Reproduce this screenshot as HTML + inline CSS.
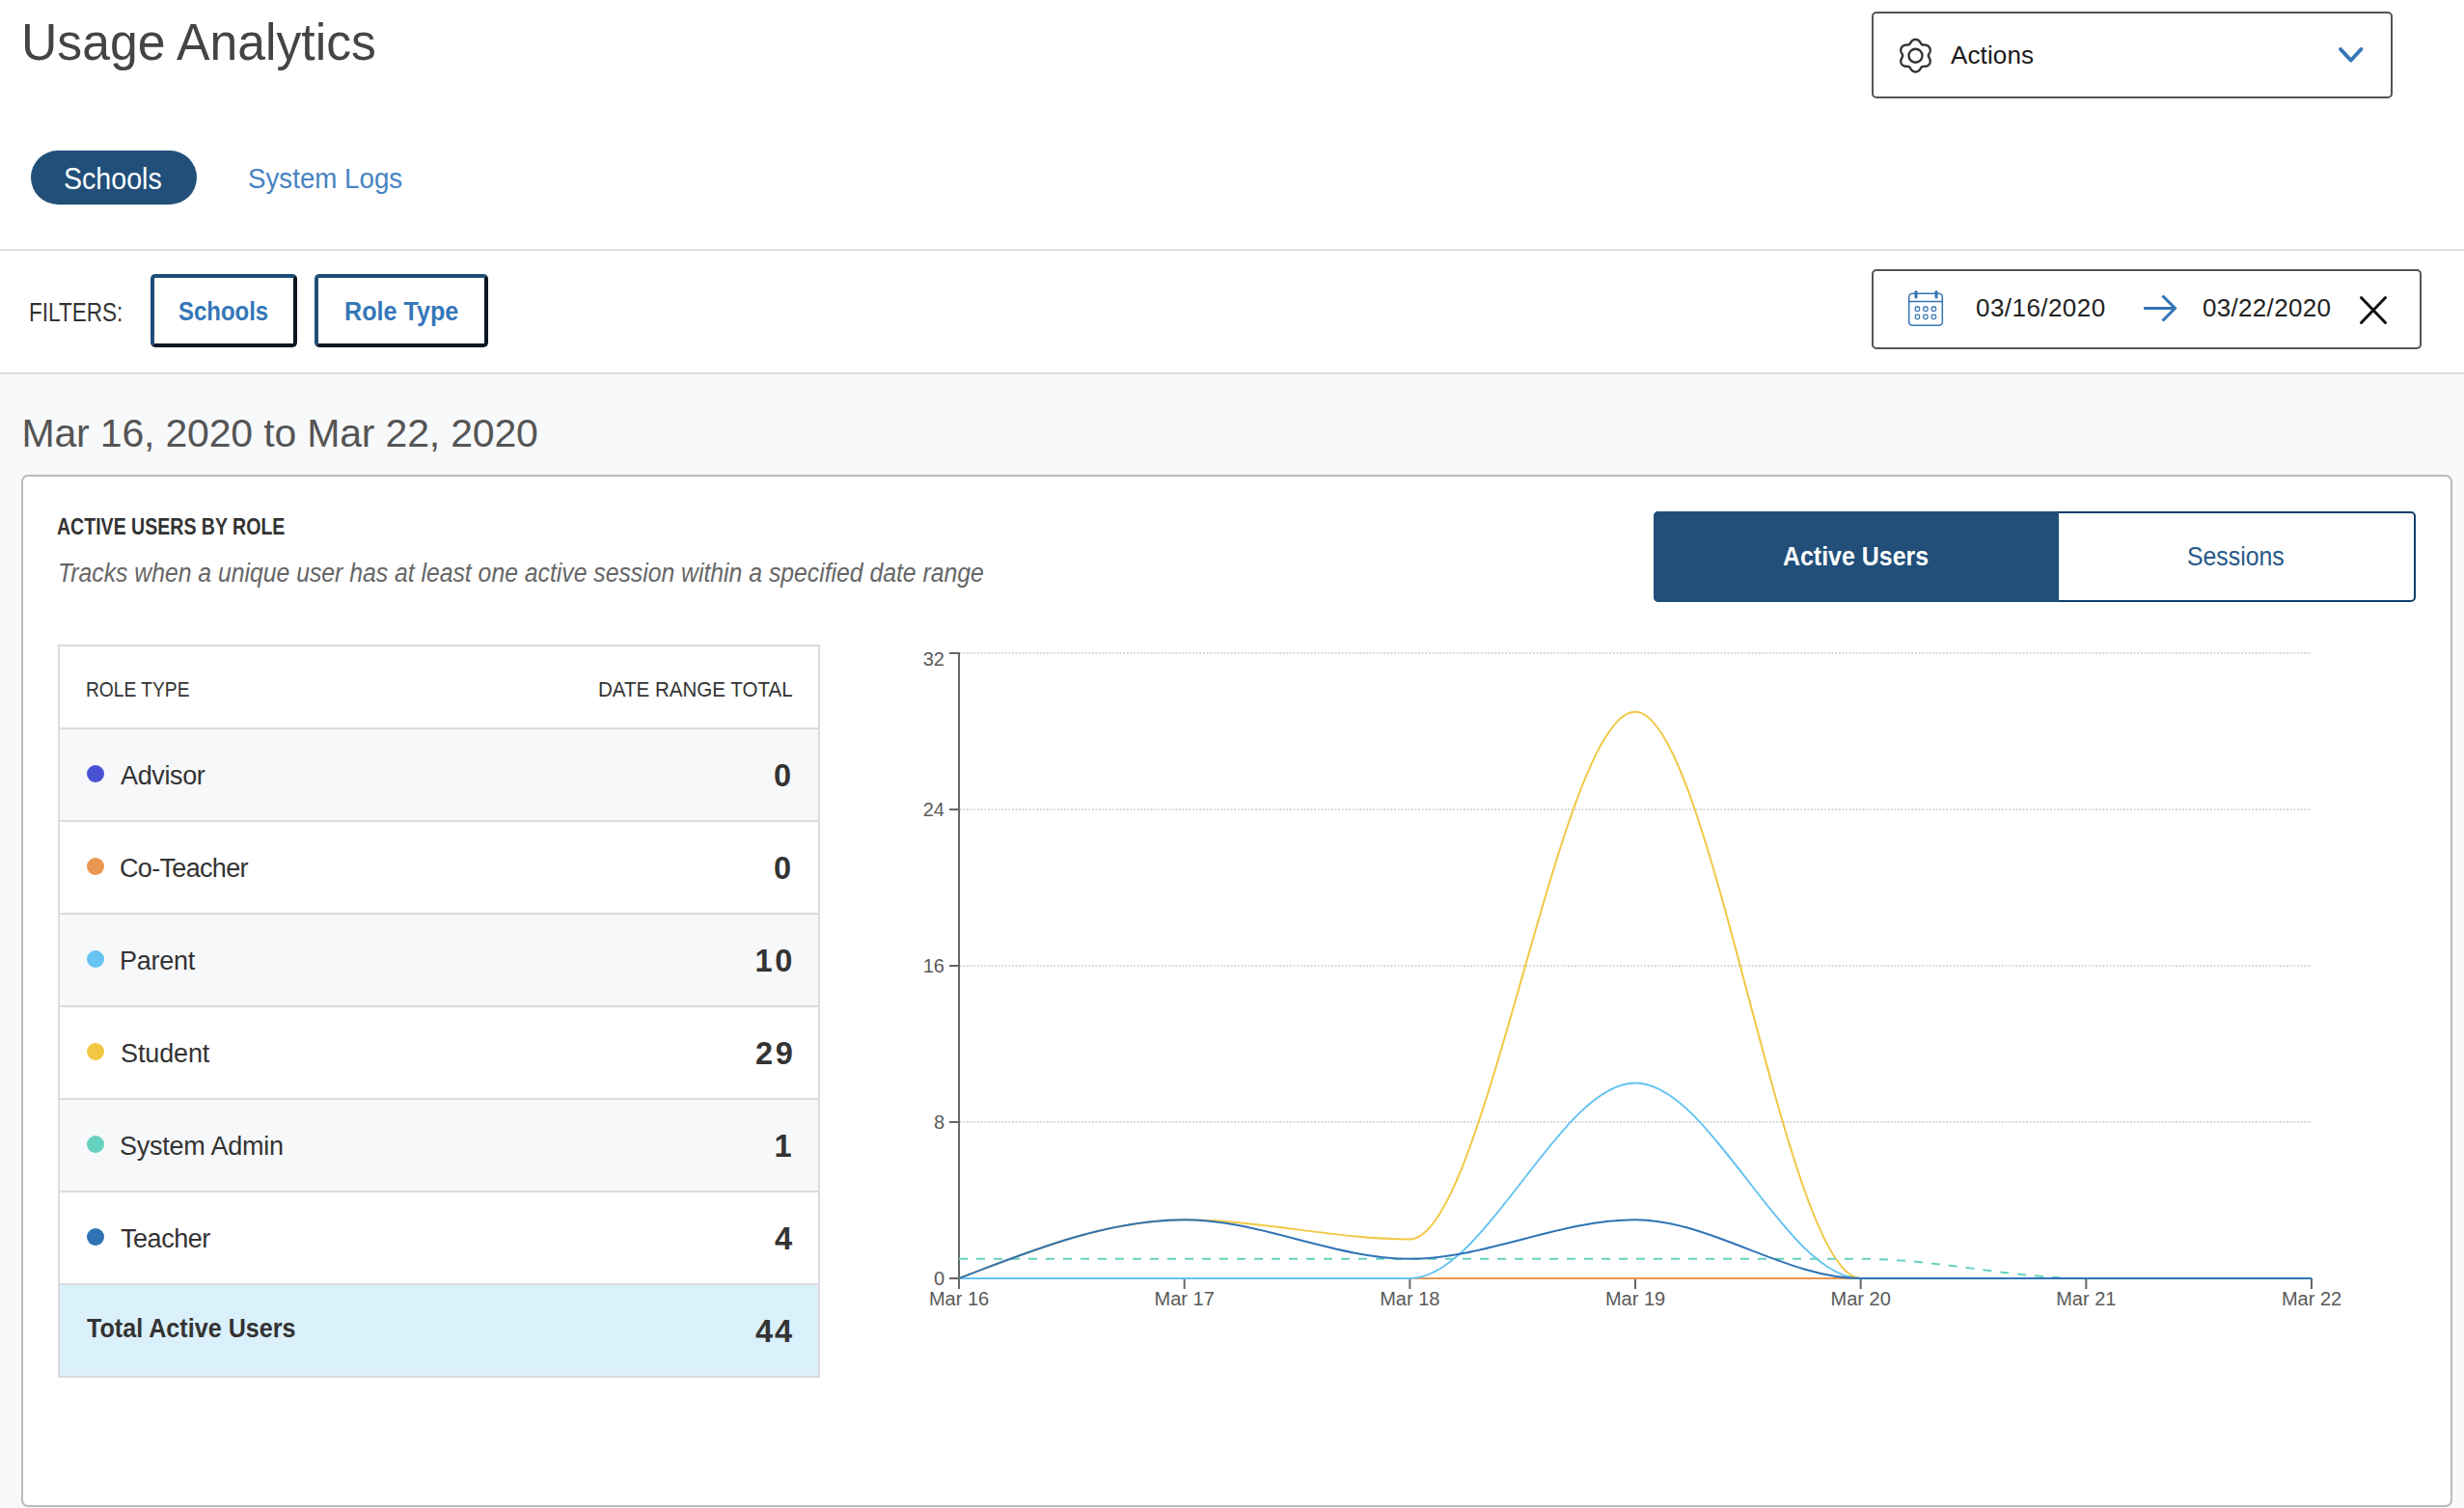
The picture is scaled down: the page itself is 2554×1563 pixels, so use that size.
<!DOCTYPE html>
<html><head><meta charset="utf-8"><style>
html,body{margin:0;padding:0;}
body{width:2554px;height:1563px;overflow:hidden;position:relative;background:#fff;font-family:"Liberation Sans",sans-serif;}
.t{position:absolute;line-height:1;white-space:nowrap;}
.abs{position:absolute;box-sizing:border-box;}
svg{position:absolute;left:0;top:0;}
</style></head><body>
<div class="t" style="left:21.60px;top:17.14px;font-size:53px;color:#444;font-weight:normal;font-style:normal;transform:scaleX(0.9757);transform-origin:0 0">Usage Analytics</div>
<div class="abs" style="left:32px;top:156px;width:172px;height:56px;border-radius:28px;background:#214f7a;"></div>
<div class="t" style="left:66.11px;top:169.96px;font-size:31px;color:#fff;font-weight:normal;font-style:normal;transform:scaleX(0.9224);transform-origin:0 0">Schools</div>
<div class="t" style="left:257.15px;top:170.31px;font-size:30px;color:#4684c2;font-weight:normal;font-style:normal;transform:scaleX(0.9240);transform-origin:0 0">System Logs</div>
<div class="abs" style="left:0;top:258px;width:2554px;height:2px;background:#dedede;"></div>
<div class="t" style="left:30.39px;top:310.85px;font-size:27px;color:#333;font-weight:normal;font-style:normal;transform:scaleX(0.8357);transform-origin:0 0">FILTERS:</div>
<div class="abs" style="left:156px;top:284px;width:152px;height:76px;border:4px outset #1f4e79;border-radius:5px;"></div>
<div class="t" style="left:185.07px;top:310.15px;font-size:27px;color:#3577b8;font-weight:bold;font-style:normal;transform:scaleX(0.8867);transform-origin:0 0">Schools</div>
<div class="abs" style="left:326px;top:284px;width:180px;height:76px;border:4px outset #1f4e79;border-radius:5px;"></div>
<div class="t" style="left:356.64px;top:310.15px;font-size:27px;color:#3577b8;font-weight:bold;font-style:normal;transform:scaleX(0.9307);transform-origin:0 0">Role Type</div>
<div class="abs" style="left:1940px;top:12px;width:540px;height:90px;border:2px solid #555;border-radius:5px;"></div>
<svg width="2554" height="120"><g transform="translate(1985.5,57.7)"><path d="M0.00,-16.75 L0.44,-16.73 L0.87,-16.68 L1.31,-16.60 L1.73,-16.48 L2.15,-16.32 L2.55,-16.12 L2.94,-15.88 L3.32,-15.60 L3.67,-15.28 L4.00,-14.93 L4.31,-14.56 L4.60,-14.16 L4.87,-13.76 L5.13,-13.37 L5.38,-12.98 L5.62,-12.62 L5.86,-12.29 L6.12,-12.00 L6.38,-11.76 L6.67,-11.56 L6.99,-11.41 L7.34,-11.30 L7.71,-11.22 L8.12,-11.18 L8.55,-11.15 L9.01,-11.13 L9.48,-11.10 L9.97,-11.07 L10.45,-11.01 L10.93,-10.93 L11.40,-10.82 L11.85,-10.67 L12.28,-10.49 L12.68,-10.27 L13.06,-10.02 L13.40,-9.74 L13.72,-9.43 L14.01,-9.10 L14.27,-8.75 L14.51,-8.38 L14.71,-7.99 L14.88,-7.58 L15.03,-7.17 L15.13,-6.74 L15.20,-6.30 L15.23,-5.85 L15.22,-5.39 L15.16,-4.93 L15.07,-4.46 L14.93,-4.00 L14.76,-3.54 L14.57,-3.10 L14.36,-2.66 L14.14,-2.24 L13.93,-1.83 L13.74,-1.44 L13.58,-1.07 L13.45,-0.71 L13.38,-0.35 L13.35,-0.00 L13.38,0.35 L13.45,0.71 L13.58,1.07 L13.74,1.44 L13.93,1.83 L14.14,2.24 L14.36,2.66 L14.57,3.10 L14.76,3.54 L14.93,4.00 L15.07,4.46 L15.16,4.93 L15.22,5.39 L15.23,5.85 L15.20,6.30 L15.13,6.74 L15.03,7.17 L14.88,7.58 L14.71,7.99 L14.51,8.37 L14.27,8.75 L14.01,9.10 L13.72,9.43 L13.40,9.74 L13.06,10.02 L12.68,10.27 L12.28,10.49 L11.85,10.67 L11.40,10.82 L10.93,10.93 L10.45,11.01 L9.97,11.07 L9.48,11.10 L9.01,11.13 L8.55,11.15 L8.12,11.18 L7.71,11.22 L7.34,11.30 L6.99,11.41 L6.67,11.56 L6.38,11.76 L6.12,12.00 L5.86,12.29 L5.62,12.62 L5.38,12.98 L5.13,13.37 L4.87,13.76 L4.60,14.16 L4.31,14.56 L4.00,14.93 L3.67,15.28 L3.32,15.60 L2.94,15.88 L2.55,16.12 L2.15,16.32 L1.73,16.48 L1.31,16.60 L0.87,16.68 L0.44,16.73 L0.00,16.75 L-0.44,16.73 L-0.87,16.68 L-1.31,16.60 L-1.73,16.48 L-2.15,16.32 L-2.55,16.12 L-2.94,15.88 L-3.32,15.60 L-3.67,15.28 L-4.00,14.93 L-4.31,14.56 L-4.60,14.16 L-4.87,13.76 L-5.13,13.37 L-5.38,12.98 L-5.62,12.62 L-5.86,12.29 L-6.12,12.00 L-6.38,11.76 L-6.67,11.56 L-6.99,11.41 L-7.34,11.30 L-7.71,11.22 L-8.12,11.18 L-8.55,11.15 L-9.01,11.13 L-9.48,11.10 L-9.97,11.07 L-10.45,11.01 L-10.93,10.93 L-11.40,10.82 L-11.85,10.67 L-12.28,10.49 L-12.68,10.27 L-13.06,10.02 L-13.40,9.74 L-13.72,9.43 L-14.01,9.10 L-14.27,8.75 L-14.51,8.38 L-14.71,7.99 L-14.88,7.58 L-15.03,7.17 L-15.13,6.74 L-15.20,6.30 L-15.23,5.85 L-15.22,5.39 L-15.16,4.93 L-15.07,4.46 L-14.93,4.00 L-14.76,3.54 L-14.57,3.10 L-14.36,2.66 L-14.14,2.24 L-13.93,1.83 L-13.74,1.44 L-13.58,1.07 L-13.45,0.71 L-13.38,0.35 L-13.35,0.00 L-13.38,-0.35 L-13.45,-0.71 L-13.58,-1.07 L-13.74,-1.44 L-13.93,-1.83 L-14.14,-2.24 L-14.36,-2.66 L-14.57,-3.10 L-14.76,-3.54 L-14.93,-4.00 L-15.07,-4.46 L-15.16,-4.93 L-15.22,-5.39 L-15.23,-5.85 L-15.20,-6.30 L-15.13,-6.74 L-15.03,-7.17 L-14.88,-7.58 L-14.71,-7.99 L-14.51,-8.38 L-14.27,-8.75 L-14.01,-9.10 L-13.72,-9.43 L-13.40,-9.74 L-13.06,-10.02 L-12.68,-10.27 L-12.28,-10.49 L-11.85,-10.67 L-11.40,-10.82 L-10.93,-10.93 L-10.45,-11.01 L-9.97,-11.07 L-9.48,-11.10 L-9.01,-11.13 L-8.55,-11.15 L-8.12,-11.18 L-7.71,-11.22 L-7.34,-11.30 L-6.99,-11.41 L-6.67,-11.56 L-6.38,-11.76 L-6.12,-12.00 L-5.86,-12.29 L-5.62,-12.62 L-5.38,-12.98 L-5.13,-13.37 L-4.87,-13.76 L-4.60,-14.16 L-4.31,-14.56 L-4.00,-14.93 L-3.67,-15.28 L-3.32,-15.60 L-2.94,-15.88 L-2.55,-16.12 L-2.15,-16.32 L-1.73,-16.48 L-1.31,-16.60 L-0.87,-16.68 L-0.44,-16.73Z" fill="none" stroke="#333" stroke-width="2.4"/><circle r="7" fill="none" stroke="#333" stroke-width="2.4"/></g><polyline points="2426,51 2436.7,62.5 2447.4,51" fill="none" stroke="#3577b8" stroke-width="4" stroke-linecap="round" stroke-linejoin="round"/></svg>
<div class="t" style="left:2022.00px;top:43.59px;font-size:26px;color:#1a1a1a;font-weight:normal;font-style:normal;letter-spacing:0.133px">Actions</div>
<div class="abs" style="left:1940px;top:279px;width:570px;height:83px;border:2px solid #555;border-radius:5px;"></div>
<svg width="2554" height="400"><rect x="1978.7" y="304.3" width="34.6" height="33" rx="3.5" fill="none" stroke="#3474b5" stroke-width="1.5"/><line x1="1978.7" y1="312.5" x2="2013.3" y2="312.5" stroke="#3474b5" stroke-width="1.5"/><line x1="1986" y1="302.5" x2="1986" y2="308" stroke="#3474b5" stroke-width="3" stroke-linecap="round"/><line x1="2007" y1="302.5" x2="2007" y2="308" stroke="#3474b5" stroke-width="3" stroke-linecap="round"/><rect x="1985.2" y="318.0" width="4.4" height="4.4" rx="1.5" fill="none" stroke="#3474b5" stroke-width="1.3"/><rect x="1985.2" y="326.2" width="4.4" height="4.4" rx="1.5" fill="none" stroke="#3474b5" stroke-width="1.3"/><rect x="1993.7" y="318.0" width="4.4" height="4.4" rx="1.5" fill="none" stroke="#3474b5" stroke-width="1.3"/><rect x="1993.7" y="326.2" width="4.4" height="4.4" rx="1.5" fill="none" stroke="#3474b5" stroke-width="1.3"/><rect x="2002.2" y="318.0" width="4.4" height="4.4" rx="1.5" fill="none" stroke="#3474b5" stroke-width="1.3"/><rect x="2002.2" y="326.2" width="4.4" height="4.4" rx="1.5" fill="none" stroke="#3474b5" stroke-width="1.3"/><path d="M2222,319.5 L2255,319.5 M2241.5,306.5 L2254.5,319.5 L2241.5,332.5" fill="none" stroke="#3474b5" stroke-width="3"/><path d="M2447.5,308.5 L2472.5,334.5 M2472.5,308.5 L2447.5,334.5" fill="none" stroke="#111" stroke-width="3" stroke-linecap="round"/></svg>
<div class="t" style="left:2048.00px;top:305.99px;font-size:26px;color:#222;font-weight:normal;font-style:normal;letter-spacing:0.444px">03/16/2020</div>
<div class="t" style="left:2283.00px;top:305.99px;font-size:26px;color:#222;font-weight:normal;font-style:normal;letter-spacing:0.311px">03/22/2020</div>
<div class="abs" style="left:0;top:386px;width:2554px;height:2px;background:#dedede;"></div>
<div class="abs" style="left:0;top:388px;width:2554px;height:1175px;background:#f8f9fb;"></div>
<div class="t" style="left:22.50px;top:429.10px;font-size:41px;color:#555;font-weight:normal;font-style:normal;letter-spacing:-0.178px">Mar 16, 2020 to Mar 22, 2020</div>
<div class="abs" style="left:22px;top:492px;width:2520px;height:1070px;border:2px solid #bababa;border-radius:7px;background:#fff;"></div>
<div class="t" style="left:59.12px;top:534.63px;font-size:23px;color:#333;font-weight:bold;font-style:normal;transform:scaleX(0.8498);transform-origin:0 0">ACTIVE USERS BY ROLE</div>
<div class="t" style="left:60.25px;top:580.95px;font-size:27px;color:#666;font-weight:normal;font-style:italic;transform:scaleX(0.9166);transform-origin:0 0">Tracks when a unique user has at least one active session within a specified date range</div>
<div class="abs" style="left:1714px;top:530px;width:790px;height:94px;border:2px solid #0f3e6f;border-radius:5px;background:#fff;"></div><div class="abs" style="left:1714px;top:530px;width:420px;height:94px;background:#214f7a;border-radius:5px 0 0 5px;"></div>
<div class="t" style="left:1848.08px;top:564.15px;font-size:27px;color:#fff;font-weight:bold;font-style:normal;transform:scaleX(0.9235);transform-origin:0 0">Active Users</div>
<div class="t" style="left:2267.09px;top:564.15px;font-size:27px;color:#275888;font-weight:normal;font-style:normal;transform:scaleX(0.9197);transform-origin:0 0">Sessions</div>
<div class="abs" style="left:60px;top:668px;width:790px;height:760px;border:2px solid #dcdbe0;background:#fff;"></div>
<div class="t" style="left:89.31px;top:702.59px;font-size:22.7px;color:#333;font-weight:normal;font-style:normal;transform:scaleX(0.8468);transform-origin:0 0">ROLE TYPE</div>
<div class="t" style="left:620.17px;top:702.59px;font-size:22.7px;color:#333;font-weight:normal;font-style:normal;transform:scaleX(0.9055);transform-origin:0 0">DATE RANGE TOTAL</div>
<div class="abs" style="left:62px;top:754px;width:786px;height:96px;background:#f7f8fa;border-top:2px solid #dcdbe0;"></div>
<div class="abs" style="left:90px;top:793.4px;width:18px;height:18px;border-radius:50%;background:#4a52d4;"></div>
<div class="t" style="left:125.00px;top:791.15px;font-size:27px;color:#333;font-weight:normal;font-style:normal;letter-spacing:-0.367px">Advisor</div>
<div class="t" style="left:802.00px;top:788.19px;font-size:32.5px;color:#333;font-weight:bold;font-style:normal;letter-spacing:0.000px">0</div>
<div class="abs" style="left:62px;top:850px;width:786px;height:96px;background:#fff;border-top:2px solid #dcdbe0;"></div>
<div class="abs" style="left:90px;top:889.4px;width:18px;height:18px;border-radius:50%;background:#ea9550;"></div>
<div class="t" style="left:124.00px;top:887.15px;font-size:27px;color:#333;font-weight:normal;font-style:normal;letter-spacing:-0.667px">Co-Teacher</div>
<div class="t" style="left:802.00px;top:884.19px;font-size:32.5px;color:#333;font-weight:bold;font-style:normal;letter-spacing:0.000px">0</div>
<div class="abs" style="left:62px;top:946px;width:786px;height:96px;background:#f7f8fa;border-top:2px solid #dcdbe0;"></div>
<div class="abs" style="left:90px;top:985.4px;width:18px;height:18px;border-radius:50%;background:#66c3f2;"></div>
<div class="t" style="left:124.00px;top:983.15px;font-size:27px;color:#333;font-weight:normal;font-style:normal;letter-spacing:-0.240px">Parent</div>
<div class="t" style="left:782.50px;top:980.19px;font-size:32.5px;color:#333;font-weight:bold;font-style:normal;letter-spacing:2.800px">10</div>
<div class="abs" style="left:62px;top:1042px;width:786px;height:96px;background:#fff;border-top:2px solid #dcdbe0;"></div>
<div class="abs" style="left:90px;top:1081.4px;width:18px;height:18px;border-radius:50%;background:#f2c744;"></div>
<div class="t" style="left:125.00px;top:1079.15px;font-size:27px;color:#333;font-weight:normal;font-style:normal;letter-spacing:-0.133px">Student</div>
<div class="t" style="left:783.00px;top:1076.19px;font-size:32.5px;color:#333;font-weight:bold;font-style:normal;letter-spacing:2.600px">29</div>
<div class="abs" style="left:62px;top:1138px;width:786px;height:96px;background:#f7f8fa;border-top:2px solid #dcdbe0;"></div>
<div class="abs" style="left:90px;top:1177.4px;width:18px;height:18px;border-radius:50%;background:#66d1bf;"></div>
<div class="t" style="left:124.00px;top:1175.15px;font-size:27px;color:#333;font-weight:normal;font-style:normal;letter-spacing:-0.236px">System Admin</div>
<div class="t" style="left:802.50px;top:1172.19px;font-size:32.5px;color:#333;font-weight:bold;font-style:normal;letter-spacing:0.000px">1</div>
<div class="abs" style="left:62px;top:1234px;width:786px;height:96px;background:#fff;border-top:2px solid #dcdbe0;"></div>
<div class="abs" style="left:90px;top:1273.4px;width:18px;height:18px;border-radius:50%;background:#2f73b6;"></div>
<div class="t" style="left:125.00px;top:1271.15px;font-size:27px;color:#333;font-weight:normal;font-style:normal;letter-spacing:-0.467px">Teacher</div>
<div class="t" style="left:803.00px;top:1268.19px;font-size:32.5px;color:#333;font-weight:bold;font-style:normal;letter-spacing:0.000px">4</div>
<div class="abs" style="left:62px;top:1330px;width:786px;height:96px;background:#daf0fb;border-top:2px solid #dcdbe0;"></div>
<div class="t" style="left:89.55px;top:1364.25px;font-size:27px;color:#333;font-weight:bold;font-style:normal;transform:scaleX(0.9308);transform-origin:0 0">Total Active Users</div>
<div class="t" style="left:783.00px;top:1363.69px;font-size:32.5px;color:#333;font-weight:bold;font-style:normal;letter-spacing:2.000px">44</div>
<svg width="2554" height="1563"><line x1="995" y1="677.0" x2="2396" y2="677.0" stroke="#c8c8c8" stroke-width="1.6" stroke-dasharray="1.8 1.8"/><line x1="995" y1="839.0" x2="2396" y2="839.0" stroke="#c8c8c8" stroke-width="1.6" stroke-dasharray="1.8 1.8"/><line x1="995" y1="1001.0" x2="2396" y2="1001.0" stroke="#c8c8c8" stroke-width="1.6" stroke-dasharray="1.8 1.8"/><line x1="995" y1="1163.0" x2="2396" y2="1163.0" stroke="#c8c8c8" stroke-width="1.6" stroke-dasharray="1.8 1.8"/><line x1="994" y1="676" x2="994" y2="1336" stroke="#666" stroke-width="2"/><line x1="984" y1="677.0" x2="994" y2="677.0" stroke="#666" stroke-width="2"/><line x1="984" y1="839.0" x2="994" y2="839.0" stroke="#666" stroke-width="2"/><line x1="984" y1="1001.0" x2="994" y2="1001.0" stroke="#666" stroke-width="2"/><line x1="984" y1="1163.0" x2="994" y2="1163.0" stroke="#666" stroke-width="2"/><line x1="984" y1="1325.0" x2="994" y2="1325.0" stroke="#666" stroke-width="2"/><line x1="994.0" y1="1325" x2="994.0" y2="1336" stroke="#666" stroke-width="2"/><line x1="1227.6666666666667" y1="1325" x2="1227.6666666666667" y2="1336" stroke="#666" stroke-width="2"/><line x1="1461.3333333333333" y1="1325" x2="1461.3333333333333" y2="1336" stroke="#666" stroke-width="2"/><line x1="1695.0" y1="1325" x2="1695.0" y2="1336" stroke="#666" stroke-width="2"/><line x1="1928.6666666666665" y1="1325" x2="1928.6666666666665" y2="1336" stroke="#666" stroke-width="2"/><line x1="2162.333333333333" y1="1325" x2="2162.333333333333" y2="1336" stroke="#666" stroke-width="2"/><line x1="2396.0" y1="1325" x2="2396.0" y2="1336" stroke="#666" stroke-width="2"/><path d="M994.00,1325.00C1071.89,1325.00,1149.78,1325.00,1227.67,1325.00C1305.56,1325.00,1383.44,1325.00,1461.33,1325.00C1539.22,1325.00,1617.11,1325.00,1695.00,1325.00C1772.89,1325.00,1850.78,1325.00,1928.67,1325.00C2006.56,1325.00,2084.44,1325.00,2162.33,1325.00C2240.22,1325.00,2318.11,1325.00,2396.00,1325.00" fill="none" stroke="#4a52d4" stroke-width="2"/><path d="M994.00,1325.00C1071.89,1325.00,1149.78,1325.00,1227.67,1325.00C1305.56,1325.00,1383.44,1325.00,1461.33,1325.00C1539.22,1325.00,1617.11,1325.00,1695.00,1325.00C1772.89,1325.00,1850.78,1325.00,1928.67,1325.00C2006.56,1325.00,2084.44,1325.00,2162.33,1325.00C2240.22,1325.00,2318.11,1325.00,2396.00,1325.00" fill="none" stroke="#ea9550" stroke-width="2"/><path d="M994.00,1325.00C1071.89,1325.00,1149.78,1325.00,1227.67,1325.00C1305.56,1325.00,1383.44,1325.00,1461.33,1325.00C1539.22,1325.00,1617.11,1122.50,1695.00,1122.50C1772.89,1122.50,1850.78,1325.00,1928.67,1325.00C2006.56,1325.00,2084.44,1325.00,2162.33,1325.00C2240.22,1325.00,2318.11,1325.00,2396.00,1325.00" fill="none" stroke="#66c3f2" stroke-width="2"/><path d="M994.00,1325.00C1071.89,1294.62,1149.78,1264.25,1227.67,1264.25C1305.56,1264.25,1383.44,1284.50,1461.33,1284.50C1539.22,1284.50,1617.11,737.75,1695.00,737.75C1772.89,737.75,1850.78,1325.00,1928.67,1325.00C2006.56,1325.00,2084.44,1325.00,2162.33,1325.00C2240.22,1325.00,2318.11,1325.00,2396.00,1325.00" fill="none" stroke="#f2c744" stroke-width="2"/><path d="M994.00,1304.75C1071.89,1304.75,1149.78,1304.75,1227.67,1304.75C1305.56,1304.75,1383.44,1304.75,1461.33,1304.75C1539.22,1304.75,1617.11,1304.75,1695.00,1304.75C1772.89,1304.75,1850.78,1304.75,1928.67,1304.75C2006.56,1304.75,2084.44,1325.00,2162.33,1325.00C2240.22,1325.00,2318.11,1325.00,2396.00,1325.00" fill="none" stroke="#66d1bf" stroke-width="2" stroke-dasharray="9 9"/><path d="M994.00,1325.00C1071.89,1294.62,1149.78,1264.25,1227.67,1264.25C1305.56,1264.25,1383.44,1304.75,1461.33,1304.75C1539.22,1304.75,1617.11,1264.25,1695.00,1264.25C1772.89,1264.25,1850.78,1325.00,1928.67,1325.00C2006.56,1325.00,2084.44,1325.00,2162.33,1325.00C2240.22,1325.00,2318.11,1325.00,2396.00,1325.00" fill="none" stroke="#2f73b6" stroke-width="2"/><text x="979" y="690" text-anchor="end" font-size="20" fill="#5a5a5a" font-family="Liberation Sans">32</text><text x="979" y="846.0" text-anchor="end" font-size="20" fill="#5a5a5a" font-family="Liberation Sans">24</text><text x="979" y="1008.0" text-anchor="end" font-size="20" fill="#5a5a5a" font-family="Liberation Sans">16</text><text x="979" y="1170.0" text-anchor="end" font-size="20" fill="#5a5a5a" font-family="Liberation Sans">8</text><text x="979" y="1332.0" text-anchor="end" font-size="20" fill="#5a5a5a" font-family="Liberation Sans">0</text><text x="994.0" y="1353" text-anchor="middle" font-size="20" fill="#5a5a5a" font-family="Liberation Sans">Mar 16</text><text x="1227.6666666666667" y="1353" text-anchor="middle" font-size="20" fill="#5a5a5a" font-family="Liberation Sans">Mar 17</text><text x="1461.3333333333333" y="1353" text-anchor="middle" font-size="20" fill="#5a5a5a" font-family="Liberation Sans">Mar 18</text><text x="1695.0" y="1353" text-anchor="middle" font-size="20" fill="#5a5a5a" font-family="Liberation Sans">Mar 19</text><text x="1928.6666666666665" y="1353" text-anchor="middle" font-size="20" fill="#5a5a5a" font-family="Liberation Sans">Mar 20</text><text x="2162.333333333333" y="1353" text-anchor="middle" font-size="20" fill="#5a5a5a" font-family="Liberation Sans">Mar 21</text><text x="2396.0" y="1353" text-anchor="middle" font-size="20" fill="#5a5a5a" font-family="Liberation Sans">Mar 22</text></svg>
</body></html>
